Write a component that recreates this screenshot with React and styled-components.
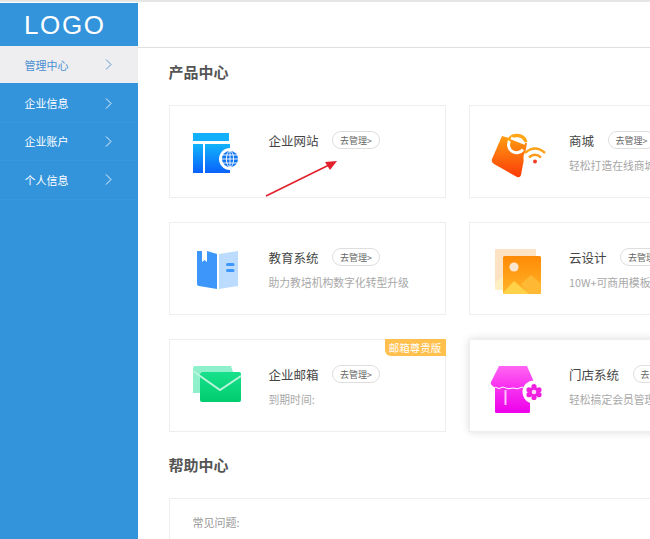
import React from "react";
import styled, { createGlobalStyle } from "styled-components";

const Global = createGlobalStyle`
  html, body {
    margin: 0;
    height: 100%;
    overflow: hidden;
    background: #fff;
    font-family: "Noto Sans CJK SC", "Liberation Sans", sans-serif;
  }
`;

const navItems = ["管理中心", "企业信息", "企业账户", "个人信息"];

const WebIcon = () => (
  <svg width="60" height="60" viewBox="0 0 60 60">
    <defs>
      <linearGradient id="webG" x1="0" y1="0" x2="0" y2="1">
        <stop offset="0" stopColor="#12b4fb" />
        <stop offset="1" stopColor="#0a62fb" />
      </linearGradient>
    </defs>
    <rect x="3" y="11" width="36" height="8" fill="#12b0fb" />
    <rect x="3" y="22" width="10" height="29" fill="url(#webG)" />
    <rect x="15" y="22" width="25" height="29" fill="url(#webG)" />
    <circle cx="40" cy="37" r="11" fill="#fff" />
    <circle cx="40" cy="37" r="8" fill="#0f74f0" />
    <g fill="none" stroke="#fff" strokeWidth="0.9">
      <ellipse cx="40" cy="37" rx="3.6" ry="8" />
      <path d="M32 37h16M33 33h14M33 41h14M40 29v16" />
    </g>
  </svg>
);

const ShopIcon = () => (
  <svg width="60" height="60" viewBox="0 0 60 60">
    <defs>
      <linearGradient id="shopG" x1="0.5" y1="0" x2="0.5" y2="1">
        <stop offset="0" stopColor="#ff9d10" />
        <stop offset="1" stopColor="#fb3a08" />
      </linearGradient>
    </defs>
    <path d="M12 14 L37 21 L31 53 Q30 56 27 55 L4 42 Q1 40 2 37 Z" fill="url(#shopG)" />
    <path d="M18 20 A9.5 9.5 0 0 1 36 20" fill="none" stroke="#ffa516" strokeWidth="3.4" />
    <path d="M21 16 L35 21.5" stroke="#fff" strokeWidth="2.6" />
    <path d="M19.5 19 A8 8 0 0 0 33 27.5" fill="none" stroke="#fff" strokeWidth="3" />
    <circle cx="45" cy="36" r="11.5" fill="#fff" />
    <path d="M35 31 Q45 22 55 31" fill="none" stroke="#ffa21a" strokeWidth="2.4" />
    <path d="M39 35.5 Q45 30 51 35.5" fill="none" stroke="#ff9a1a" strokeWidth="2.4" />
    <circle cx="45" cy="39.5" r="2" fill="#f0402a" />
  </svg>
);

const BookIcon = () => (
  <svg width="60" height="60" viewBox="0 0 60 60">
    <path d="M7 12 H12 V23 L14.5 21 L17 23 V12 L27 15 V50 L9 47 Q7 47 7 45 Z" fill="#3d97fb" />
    <path d="M29 15 L48 12 V47 L29 50 Z" fill="#bcdcff" />
    <rect x="36" y="24" width="8.5" height="3" rx="1.5" fill="#3d97fb" />
    <rect x="36" y="30" width="8.5" height="3" rx="1.5" fill="#3d97fb" />
  </svg>
);

const ImageIcon = () => (
  <svg width="60" height="60" viewBox="0 0 60 60">
    <defs>
      <linearGradient id="picG" x1="0.5" y1="0" x2="0.5" y2="1">
        <stop offset="0" stopColor="#ff8a05" />
        <stop offset="1" stopColor="#ffb52a" />
      </linearGradient>
    </defs>
    <rect x="5" y="10" width="41" height="41" rx="1" fill="#fde2c4" />
    <path d="M5 44 L13 37 V51 H6 Q5 51 5 50 Z" fill="#fff0c4" />
    <rect x="13" y="17" width="38" height="38" rx="1.5" fill="url(#picG)" />
    <circle cx="24" cy="28" r="4.6" fill="#fde6cf" />
    <path d="M31 45 L41 36 L51 45 V54 Q51 55 50 55 H38 Z" fill="#ffb833" />
    <path d="M13 54 L24 42 L39 55 H14 Q13 55 13 54 Z" fill="#ffd24a" />
  </svg>
);

const MailIcon = () => (
  <svg width="60" height="60" viewBox="0 0 60 60">
    <defs>
      <linearGradient id="mailG" x1="0.5" y1="0" x2="0.5" y2="1">
        <stop offset="0" stopColor="#18e08c" />
        <stop offset="1" stopColor="#00cd6e" />
      </linearGradient>
    </defs>
    <path d="M5 10 H41 L43 16 H10 V37 H3 V12 Q3 10 5 10 Z" fill="#8ff0cc" />
    <rect x="10" y="16" width="41" height="30" rx="2" fill="url(#mailG)" />
    <path d="M3 15 L30 34 L51 20" fill="none" stroke="#b8f5da" strokeWidth="2" />
  </svg>
);

const StoreIcon = () => (
  <svg width="60" height="60" viewBox="0 0 60 60">
    <defs>
      <linearGradient id="storeG" x1="0.5" y1="0" x2="0.5" y2="1">
        <stop offset="0" stopColor="#ff66f2" />
        <stop offset="1" stopColor="#f82cf0" />
      </linearGradient>
      <linearGradient id="storeBody" x1="0.5" y1="0" x2="0.5" y2="1">
        <stop offset="0" stopColor="#f83cf2" />
        <stop offset="1" stopColor="#ee00ea" />
      </linearGradient>
    </defs>
    <rect x="5" y="28" width="35" height="29" rx="1.5" fill="url(#storeBody)" />
    <path d="M9 10 H37 L44 26 Q44 31 39 32 Q35 33 32 30 Q28 33 23 31 Q17 33 13 30 Q8 33 4 31 Q0 29 1 26 Z" fill="url(#storeG)" />
    <path d="M5 31 Q9 34 13 31 Q18 34 23 32 Q28 34 32 31 Q35 34 39 33" fill="none" stroke="#fff" strokeWidth="1" />
    <rect x="14.5" y="34" width="2" height="15" fill="#ffc4fa" />
    <circle cx="44" cy="36" r="11.5" fill="#fff" />
    <g fill="#f020e0">
      <circle cx="44" cy="30.5" r="2.6" />
      <circle cx="49" cy="33.8" r="2.6" />
      <circle cx="49" cy="38.7" r="2.6" />
      <circle cx="44" cy="41.5" r="2.6" />
      <circle cx="39" cy="38.7" r="2.6" />
      <circle cx="39" cy="33.8" r="2.6" />
      <circle cx="44" cy="36" r="5" />
    </g>
    <circle cx="44" cy="36" r="2.3" fill="#ffd9fa" />
  </svg>
);

const products = [
  { title: "企业网站", icon: <WebIcon />, arrow: true },
  { title: "商城", desc: "轻松打造在线商城", icon: <ShopIcon /> },
  { title: "教育系统", desc: "助力教培机构数字化转型升级", icon: <BookIcon /> },
  { title: "云设计", desc: "10W+可商用模板", icon: <ImageIcon /> },
  { title: "企业邮箱", desc: "到期时间:", icon: <MailIcon />, badge: "邮箱尊贵版" },
  { title: "门店系统", desc: "轻松搞定会员管理", icon: <StoreIcon />, raised: true },
];

export default function App() {
  return (
    <Page>
      <Global />
      <Sidebar>
        <Logo>LOGO</Logo>
        {navItems.map((name, index) => (
          <NavItem key={name} active={index === 0}>
            {name}
            <svg width="7" height="11" viewBox="0 0 7 11" fill="none" stroke="currentColor" strokeWidth="0.9">
              <path d="M1 0.5 L6 5.5 L1 10.5" />
            </svg>
          </NavItem>
        ))}
      </Sidebar>
      <Content>
        <Header />
        <Main>
          <SectionTitle>产品中心</SectionTitle>
          <CardGrid>
            {products.map((product) => (
              <Card key={product.title} raised={product.raised}>
                {product.icon}
                <Info>
                  <TitleRow>
                    <CardTitle>{product.title}</CardTitle>
                    <Pill>去管理&gt;</Pill>
                  </TitleRow>
                  {product.desc && <Desc>{product.desc}</Desc>}
                </Info>
                {product.badge && <Badge>{product.badge}</Badge>}
                {product.arrow && (
                  <Arrow width="80" height="44" viewBox="0 0 80 44">
                    <path d="M1 41 L64 10" stroke="#e2202c" strokeWidth="1.6" fill="none" />
                    <path d="M72 6 L60 7 L65 15 Z" fill="#e2202c" />
                  </Arrow>
                )}
              </Card>
            ))}
          </CardGrid>
          <HelpTitle>帮助中心</HelpTitle>
          <HelpCard>常见问题:</HelpCard>
        </Main>
      </Content>
    </Page>
  );
}

const Page = styled.div`
  display: flex;
  height: 100vh;
  border-top: 2px solid #e6e6e6;
  box-sizing: border-box;
  overflow: hidden;
`;
const Sidebar = styled.div`
  width: 138px;
  flex-shrink: 0;
  margin-top: 1px;
  background: #3394db;
`;
const Logo = styled.div`
  height: 43px;
  padding-left: 24px;
  font-family: "Liberation Sans", sans-serif;
  font-size: 26px;
  line-height: 45px;
  letter-spacing: 1.6px;
  color: #fff;
`;
const NavItem = styled.div`
  height: 38.4px;
  box-sizing: border-box;
  display: flex;
  align-items: center;
  justify-content: space-between;
  padding: 0 26px 0 24.5px;
  font-size: 11px;
  color: ${(props) => (props.active ? "#4b8fd0" : "#fff")};
  background: ${(props) => (props.active ? "#eeeef0" : "transparent")};
  border-bottom: 1px solid ${(props) => (props.active ? "#3394db" : "#3a98df")};
`;
const Content = styled.div`
  flex: 1;
  min-width: 0;
`;
const Header = styled.div`
  height: 45px;
  border-bottom: 1px solid #e0e0e0;
`;
const Main = styled.div`
  padding: 14px 0 0 30.5px;
`;
const SectionTitle = styled.h2`
  margin: 0 0 23px;
  font-size: 15px;
  line-height: 20px;
  font-weight: 700;
  color: #555;
`;
const HelpTitle = styled(SectionTitle)`
  margin-top: 23px;
`;
const CardGrid = styled.div`
  display: grid;
  grid-template-columns: 277px 277px;
  grid-auto-rows: 93px;
  gap: 24px 23.5px;
`;
const Card = styled.div`
  position: relative;
  display: flex;
  align-items: center;
  gap: 19px;
  padding-left: 20px;
  box-sizing: border-box;
  background: #fff;
  border: 1px solid #eeeeee;
  box-shadow: ${(props) => (props.raised ? "0 0 8px rgba(0, 0, 0, 0.14)" : "none")};
`;
const Info = styled.div`
  align-self: flex-start;
  padding-top: 25px;
  white-space: nowrap;
`;
const TitleRow = styled.div`
  display: flex;
  align-items: center;
  gap: 13.5px;
  height: 18px;
`;
const CardTitle = styled.span`
  font-size: 12.5px;
  color: #444;
`;
const Pill = styled.span`
  width: 48px;
  height: 18px;
  box-sizing: border-box;
  display: flex;
  align-items: center;
  justify-content: center;
  border: 1px solid #dedede;
  border-radius: 9px;
  font-size: 9px;
  color: #666;
`;
const Desc = styled.div`
  margin-top: 7px;
  font-size: 10.8px;
  line-height: 18px;
  color: #a8a8a8;
`;
const Badge = styled.div`
  position: absolute;
  top: -1px;
  right: -1px;
  width: 61px;
  height: 17px;
  border-bottom-left-radius: 6px;
  background: #ffc04d;
  color: #fff;
  font-size: 10.5px;
  line-height: 17px;
  text-align: center;
`;
const Arrow = styled.svg`
  position: absolute;
  left: 95px;
  top: 49px;
`;
const HelpCard = styled.div`
  width: 700px;
  height: 80px;
  box-sizing: border-box;
  padding: 14px 0 0 23px;
  border: 1px solid #eeeeee;
  font-size: 11px;
  line-height: 18px;
  color: #999;
`;
